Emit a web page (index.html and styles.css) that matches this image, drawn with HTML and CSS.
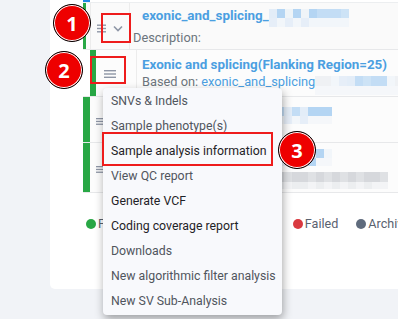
FILE: index.html
```html
<!DOCTYPE html>
<html>
<head>
<meta charset="utf-8">
<link rel="stylesheet" href="styles.css">
</head>
<body>
<div class="page">
  <div class="card">
    <div class="table">
      <div class="row row0"><span class="bar bar-blue"></span></div>
      <div class="row row1">
        <span class="bar bar-thin"></span>
        <span class="gap4"></span>
        <div class="icons">
          <svg class="list" width="9" height="9" viewBox="0 0 9 9"><rect x="0" y="0.5" width="9" height="1.4" fill="#8e96a6"/><rect x="0" y="3.8" width="9" height="1.4" fill="#8e96a6"/><rect x="0" y="7.1" width="9" height="1.4" fill="#8e96a6"/></svg>
          <svg class="chev" width="10" height="7" viewBox="0 0 10 7"><path d="M1 1.5 L5 5.5 L9 1.5" fill="none" stroke="#8e96a6" stroke-width="1.6"/></svg>
        </div>
        <div class="content c1">
          <div class="title">exonic_and_splicing_<span class="pix pix-r1"><i class="a"></i><i class="b"></i><i class="e"></i><i class="b"></i><i class="f"></i><i class="b"></i><i class="c"></i><i class="c"></i><i class="c"></i><i class="d"></i><i class="g"></i><i class="h"></i><i class="g"></i><i class="h"></i><i class="g"></i><i class="h"></i><i class="h"></i><i class="h"></i><i class="h"></i><i class="h"></i></span></div>
          <div class="muted desc">Description:</div>
        </div>
      </div>
      <div class="row row2">
        <span class="gap7"></span>
        <span class="bar bar-sub"></span>
        <div class="icons icons2">
          <svg width="12" height="8" viewBox="0 0 12 8"><rect x="0" y="0" width="12" height="1.4" fill="#8e96a6"/><rect x="0" y="3.3" width="12" height="1.4" fill="#8e96a6"/><rect x="0" y="6.6" width="12" height="1.4" fill="#8e96a6"/></svg>
        </div>
        <div class="content c2">
          <div class="title">Exonic and splicing(Flanking Region=25)</div>
          <div class="muted based">Based on: <span class="link">exonic_and_splicing</span><span class="pix pix-r2"><i class="k"></i><i class="k"></i><i class="h"></i><i class="g"></i><i class="a"></i><i class="c"></i><i class="d"></i><i class="c"></i><i class="c"></i><i class="h"></i><i class="k"></i><i class="l"></i><i class="l"></i><i class="l"></i><i class="l"></i><i class="l"></i><i class="l"></i><i class="l"></i><i class="l"></i><i class="l"></i><i class="l"></i><i class="l"></i></span></div>
        </div>
      </div>
      <div class="row row3">
        <span class="bar bar-wide"></span>
        <div class="icons icons3">
          <svg width="7" height="7" viewBox="0 0 7 7"><rect x="0" y="0" width="7" height="1.3" fill="#8e96a6"/><rect x="0" y="2.8" width="7" height="1.3" fill="#8e96a6"/><rect x="0" y="5.6" width="7" height="1.3" fill="#8e96a6"/></svg>
        </div>
        <div class="content c3">
          <span class="pix pix-r3"><i class="c"></i><i class="a"></i><i class="c"></i><i class="a"></i><i class="b"></i><i class="b"></i><i class="b"></i><i class="h"></i><i class="g"></i><i class="h"></i><i class="g"></i><i class="l"></i><i class="l"></i><i class="l"></i></span>
        </div>
      </div>
      <div class="row row4">
        <span class="bar bar-wide"></span>
        <div class="icons icons3">
          <svg width="7" height="7" viewBox="0 0 7 7"><rect x="0" y="0" width="7" height="1.3" fill="#8e96a6"/><rect x="0" y="2.8" width="7" height="1.3" fill="#8e96a6"/><rect x="0" y="5.6" width="7" height="1.3" fill="#8e96a6"/></svg>
        </div>
        <div class="content c4">
          <span class="pix pix-r3"><i class="h"></i><i class="a"></i><i class="c"></i><i class="c"></i><i class="a"></i><i class="b"></i><i class="h"></i><i class="g"></i><i class="g"></i><i class="h"></i><i class="g"></i><i class="b"></i><i class="l"></i><i class="l"></i></span>
          <span class="pix pix-grey"><i class="m"></i><i class="n"></i><i class="m"></i><i class="m"></i><i class="n"></i><i class="m"></i><i class="n"></i><i class="m"></i><i class="n"></i><i class="m"></i><i class="n"></i><i class="m"></i><i class="m"></i><i class="n"></i><i class="o"></i><i class="p"></i><i class="o"></i><i class="o"></i><i class="p"></i><i class="o"></i><i class="p"></i><i class="o"></i><i class="p"></i><i class="o"></i><i class="p"></i><i class="o"></i><i class="p"></i><i class="p"></i></span>
        </div>
      </div>
    </div>
    <div class="legend">
      <span class="item"><span class="dot green"></span>Finished</span>
      <span class="item"><span class="dot blue"></span>In progress</span>
      <span class="item"><span class="dot orange"></span>Idle</span>
      <span class="item"><span class="dot red"></span>Failed</span>
      <span class="item"><span class="dot grey"></span>Archived</span>
    </div>
  </div>

  <ul class="menu">
    <li>SNVs &amp; Indels</li>
    <li>Sample phenotype(s)</li>
    <li class="dark">Sample analysis information</li>
    <li>View QC report</li>
    <li class="dark">Generate VCF</li>
    <li class="dark">Coding coverage report</li>
    <li>Downloads</li>
    <li>New algorithmic filter analysis</li>
    <li>New SV Sub-Analysis</li>
  </ul>

  <span class="box box1"></span>
  <span class="box box2"></span>
  <span class="box box3"></span>
  <span class="badge badge1">1</span>
  <span class="badge badge2">2</span>
  <span class="badge badge3">3</span>
</div>
</body>
</html>
```

FILE: styles.css
```css
* { box-sizing: border-box; }
html, body { margin: 0; padding: 0; }
body {
  background: #f1f3f7;
  font-family: Roboto, "Noto Sans", sans-serif;
  font-size: 12.3px;
  color: #212529;
}
.page {
  position: relative;
  width: 398px;
  height: 319px;
  overflow: hidden;
  padding-left: 50px;
}
.card {
  background: #fff;
  height: 289px;
  border-radius: 0 0 0 5px;
  padding-left: 33px;
}
.table { width: 330px; }
.row {
  display: flex;
  border-bottom: 1px solid #e7e8ea;
}
.row0 { height: 3px; border-bottom: 1px solid #eceef0; }
.row1 { height: 47px; background: #fafafa; }
.row2 { height: 47px; background: #fcfcfc; }
.row3 { height: 46px; background: #fcfcfc; }
.row4 { height: 50px; background: #fcfcfc; }

.bar { flex: none; background: #28a745; }
.bar-blue { width: 7px; background: #1e88e5; }
.bar-thin { width: 3px; }
.bar-sub { width: 6px; }
.bar-wide { width: 7px; }
.gap4 { width: 4px; flex: none; }
.gap7 { width: 7px; flex: none; background: #fff; }

.icons {
  flex: none;
  display: flex;
  align-items: center;
  gap: 7px;
  width: 40px;
  padding-left: 6px;
  padding-top: 5px;
  border-left: 1px solid #ececec;
  border-right: 1px solid #ececec;
}
.icons2 { width: 41px; padding-left: 8px; padding-top: 1px; border-left: none; }
.icons3 { width: 40px; padding-left: 6px; padding-top: 3px; border: none; }

.content { flex: 1; min-width: 0; white-space: nowrap; overflow: hidden; }
.c1 { padding: 4px 0 0 3px; }
.c2 { padding: 6px 0 0 5px; }
.c3 { padding: 8px 0 0 146px; }
.c4 { padding: 6px 0 0 146px; }

.title {
  color: #4b9fe1;
  font-weight: 700;
  font-size: 13.4px;
  line-height: 17px;
  display: flex;
  align-items: flex-start;
}
.c1 .title { padding-left: 9px; }
.muted { color: #6c757d; line-height: 18px; font-size: 12.8px; }
.desc { margin-top: 2px; }
.based { display: flex; align-items: flex-start; }
.link { color: #4b9fe1; margin-left: 3px; }

.pix { display: inline-grid; flex: none; }
.pix i { display: block; }
.pix-r1 { grid-template-columns: repeat(10, 8px); grid-template-rows: 9px 9px; margin-top: 2px; }
.pix-r2 { grid-template-columns: repeat(11, 8px); grid-template-rows: 10px 9px; margin-top: 3px; }
.pix-r3 { grid-template-columns: repeat(7, 8px); grid-template-rows: 9px 8px; }
.pix-grey { grid-template-columns: repeat(14, 8px); grid-template-rows: 10px 7px; margin-top: 6px; display: grid; }
.c4 .pix-r3 { display: grid; }
.a { background: #e3edf8; }
.b { background: #b4d5f3; }
.c { background: #c3ddf5; }
.d { background: #cde3f6; }
.e { background: #eef4f8; }
.f { background: #f0f4f8; }
.g { background: #e6eef8; }
.h { background: #f2f6fa; }
.k { background: #eff1f4; }
.l { background: #f5f7fa; }
.m { background: #d6d8dc; }
.n { background: #dfe1e4; }
.o { background: #eceef0; }
.p { background: #f3f4f6; }

.legend {
  display: flex;
  gap: 18px;
  margin-top: 15px;
  padding-left: 3px;
  color: #5a6270;
  line-height: 16px;
  font-size: 12.6px;
}
.item { display: flex; align-items: center; }
.dot { width: 10px; height: 10px; border-radius: 50%; margin-right: 2px; }
.green { background: #28a745; }
.blue { background: #1e88e5; }
.orange { background: #f0ad4e; }
.red { background: #d9393f; }
.grey { background: #5f6b7d; }

.menu {
  position: absolute;
  left: 103px;
  top: 88px;
  width: 179px;
  margin: 0;
  padding: 1px 0;
  list-style: none;
  background: #f8f9fc;
  border-radius: 4px;
  box-shadow: 1px 4px 10px rgba(0,0,0,0.35);
}
.menu li {
  height: 25px;
  line-height: 25px;
  padding-left: 8px;
  color: #50555c;
  white-space: nowrap;
}
.menu li.dark { color: #1f2327; }

.box {
  position: absolute;
  border: 2px solid #ee1c1c;
}
.box1 { left: 101px; top: 13px; width: 30px; height: 30px; }
.box2 { left: 90px; top: 56px; width: 36px; height: 28px; }
.box3 { left: 102px; top: 132px; width: 171px; height: 34px; }

.badge {
  position: absolute;
  width: 38px;
  height: 38px;
  border-radius: 50%;
  background: #ee0000;
  border: 1px solid #000;
  box-shadow: inset 0 0 0 1px #fff;
  color: #fff;
  font-weight: 700;
  font-size: 20px;
  display: flex;
  align-items: center;
  justify-content: center;
  font-family: "Open Sans", Roboto, sans-serif;
}
.badge1 { left: 53px; top: 4px; }
.badge2 { left: 45px; top: 51px; }
.badge3 { left: 278px; top: 131px; }
```
